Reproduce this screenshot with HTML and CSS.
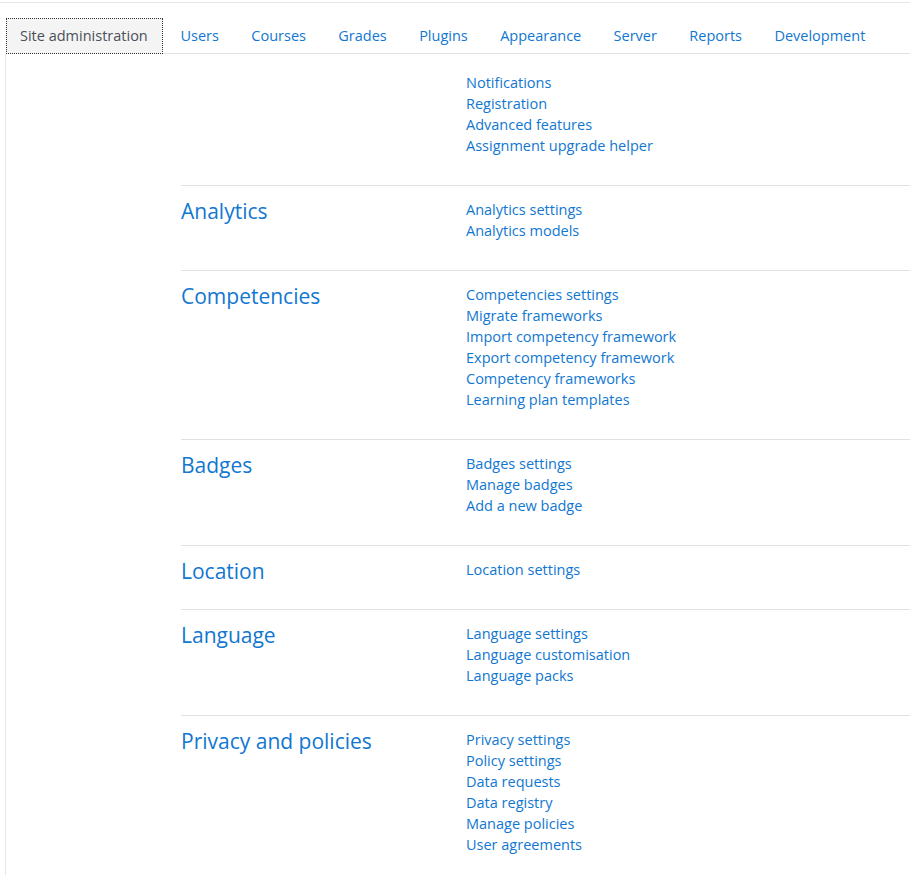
FILE: index.html
```html
<!DOCTYPE html>
<html lang="en">
<head>
<meta charset="utf-8">
<title>Site administration</title>
<link rel="stylesheet" href="styles.css">
</head>
<body>
<div class="topline"></div>
<ul class="tabs">
  <li class="tab active"><a href="#">Site administration</a></li>
  <li class="tab"><a href="#">Users</a></li>
  <li class="tab"><a href="#">Courses</a></li>
  <li class="tab"><a href="#">Grades</a></li>
  <li class="tab"><a href="#">Plugins</a></li>
  <li class="tab"><a href="#">Appearance</a></li>
  <li class="tab"><a href="#">Server</a></li>
  <li class="tab"><a href="#">Reports</a></li>
  <li class="tab"><a href="#">Development</a></li>
</ul>
<div class="content">
  <div class="section first">
    <h4 class="heading"></h4>
    <ul class="links">
      <li><a href="#">Notifications</a></li>
      <li><a href="#">Registration</a></li>
      <li><a href="#">Advanced features</a></li>
      <li><a href="#">Assignment upgrade helper</a></li>
    </ul>
  </div>
  <div class="section">
    <h4 class="heading"><a href="#">Analytics</a></h4>
    <ul class="links">
      <li><a href="#">Analytics settings</a></li>
      <li><a href="#">Analytics models</a></li>
    </ul>
  </div>
  <div class="section">
    <h4 class="heading"><a href="#">Competencies</a></h4>
    <ul class="links">
      <li><a href="#">Competencies settings</a></li>
      <li><a href="#">Migrate frameworks</a></li>
      <li><a href="#">Import competency framework</a></li>
      <li><a href="#">Export competency framework</a></li>
      <li><a href="#">Competency frameworks</a></li>
      <li><a href="#">Learning plan templates</a></li>
    </ul>
  </div>
  <div class="section">
    <h4 class="heading"><a href="#">Badges</a></h4>
    <ul class="links">
      <li><a href="#">Badges settings</a></li>
      <li><a href="#">Manage badges</a></li>
      <li><a href="#">Add a new badge</a></li>
    </ul>
  </div>
  <div class="section">
    <h4 class="heading"><a href="#">Location</a></h4>
    <ul class="links">
      <li><a href="#">Location settings</a></li>
    </ul>
  </div>
  <div class="section">
    <h4 class="heading"><a href="#">Language</a></h4>
    <ul class="links">
      <li><a href="#">Language settings</a></li>
      <li><a href="#">Language customisation</a></li>
      <li><a href="#">Language packs</a></li>
    </ul>
  </div>
  <div class="section">
    <h4 class="heading"><a href="#">Privacy and policies</a></h4>
    <ul class="links">
      <li><a href="#">Privacy settings</a></li>
      <li><a href="#">Policy settings</a></li>
      <li><a href="#">Data requests</a></li>
      <li><a href="#">Data registry</a></li>
      <li><a href="#">Manage policies</a></li>
      <li><a href="#">User agreements</a></li>
    </ul>
  </div>
</div>
</body>
</html>
```
FILE: styles.css
```css
html { overflow: hidden; }
body {
  margin: 0;
  font-family: "Open Sans", "Liberation Sans", sans-serif;
  font-size: 14.5px;
  line-height: 21px;
  color: #373a3c;
  background: #fff;
}
a { color: #1177d1; text-decoration: none; }

.topline {
  margin-top: 2px;
  border-top: 1px solid #e6e6e6;
  height: 15px;
}

.tabs {
  list-style: none;
  margin: 0 0 0 6px;
  padding: 0;
  display: flex;
  border-bottom: 1px solid #dee2e6;
  height: 35px;
}
.tab a {
  display: block;
  padding: 7px 16.2px 7px;
}
.tab.active { margin-right: 1.5px; }
.tab.active a {
  color: #495057;
  background: #f4f4f4;
  border: 1px dotted #333;
  padding: 6px 14px 7px 13px;
}

.content {
  margin-left: 5px;
  border-left: 1px solid #e6e6e6;
  padding-left: 175px;
  padding-top: 5px;
}

.section {
  display: grid;
  grid-template-columns: 285px 1fr;
  border-top: 1px solid #dee2e6;
  padding: 12px 0;
}
.section.first { border-top: 0; padding-top: 12px; }

.heading {
  margin: 0;
  font-size: 21px;
  line-height: 26px;
  font-weight: 400;
}

.links {
  list-style: none;
  margin: 0 0 17px;
  padding: 1px 0 0;
}
```
